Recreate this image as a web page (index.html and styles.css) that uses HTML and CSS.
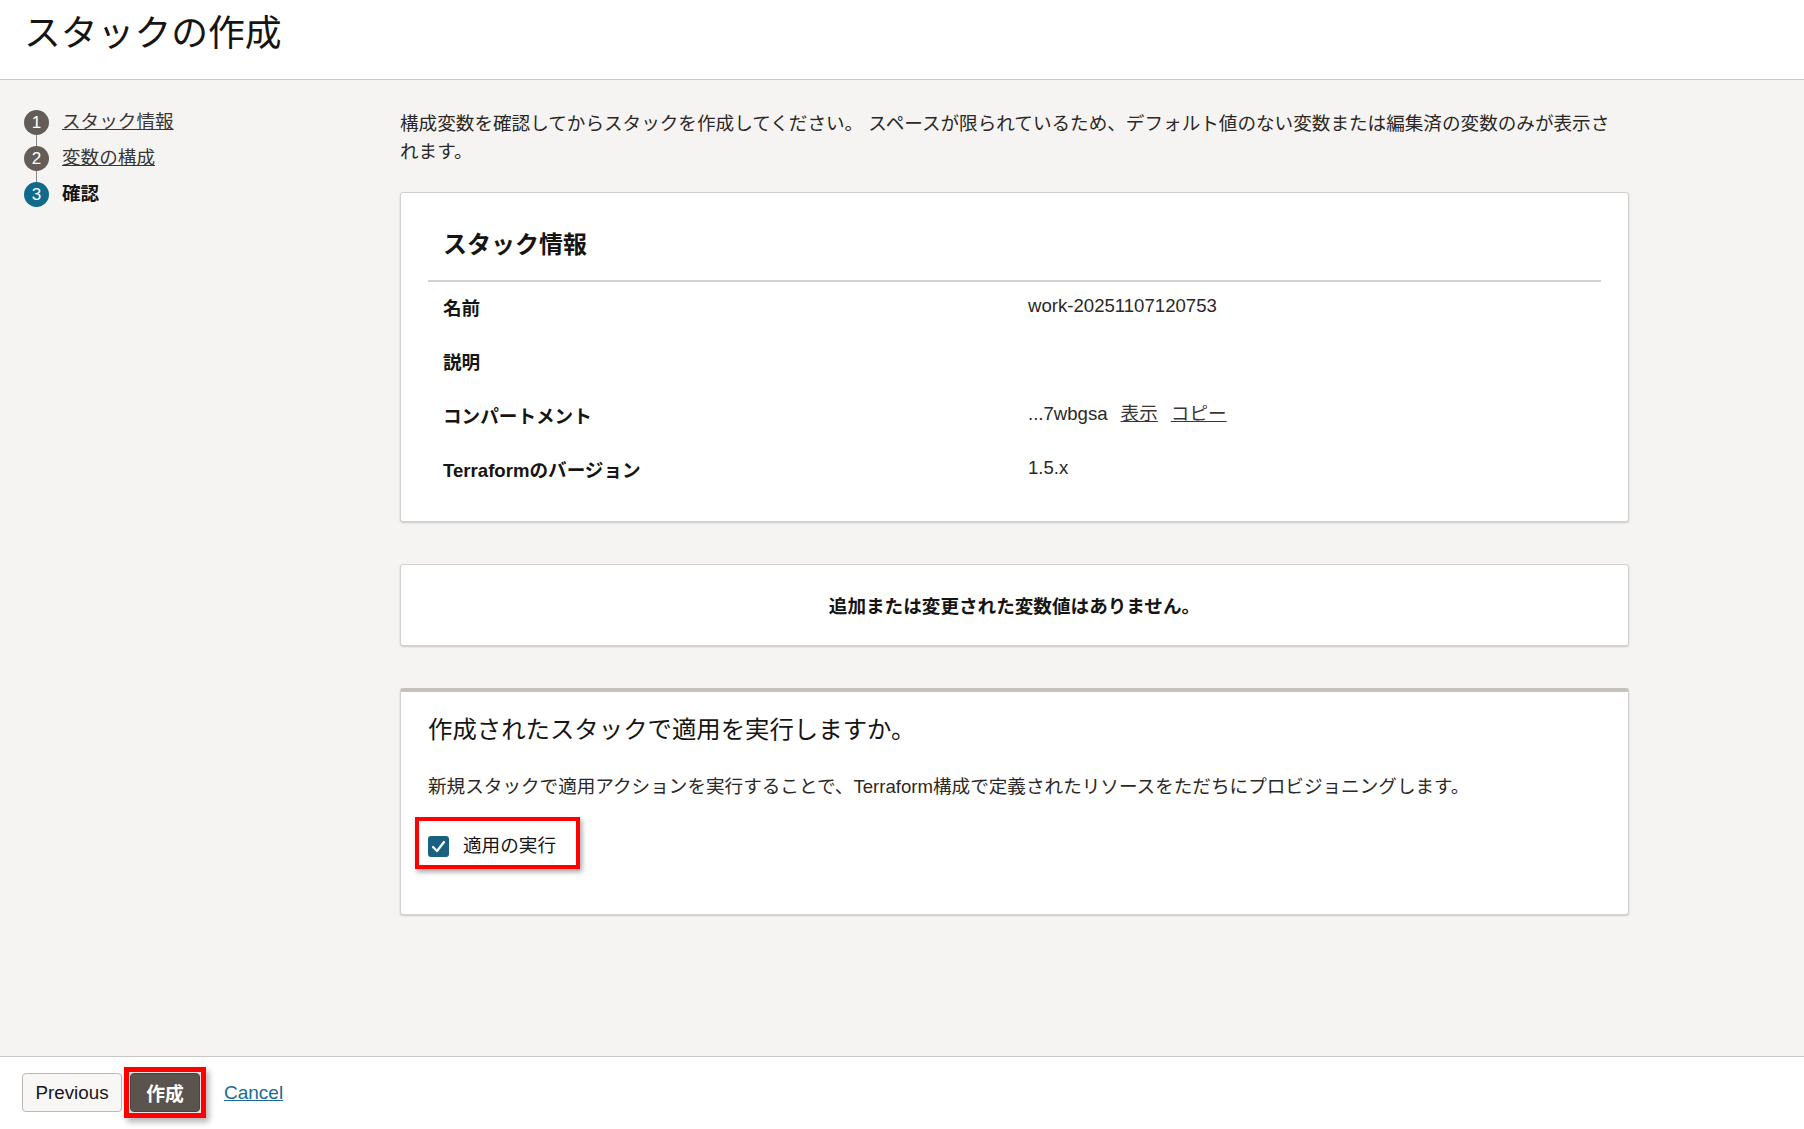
FILE: index.html
```html
<!DOCTYPE html>
<html lang="ja">
<head>
    <meta charset="UTF-8">
    <title>スタックの作成</title>
    <link rel="stylesheet" href="styles.css">
</head>
<body>
    <div class="header">
        <h1>スタックの作成</h1>
    </div>

    <div class="main">
        <ol class="steps">
            <li class="step"><span class="num">1</span><a href="#">スタック情報</a></li>
            <li class="step"><span class="num">2</span><a href="#">変数の構成</a></li>
            <li class="step current"><span class="num">3</span><span class="step-label">確認</span></li>
        </ol>

        <div class="content">
            <p class="intro">構成変数を確認してからスタックを作成してください。 スペースが限られているため、デフォルト値のない変数または編集済の変数のみが表示されます。</p>

            <div class="card info">
                <h2>スタック情報</h2>
                <div class="row"><div class="row-label">名前</div><div class="row-value">work-20251107120753</div></div>
                <div class="row"><div class="row-label">説明</div><div class="row-value"></div></div>
                <div class="row">
                    <div class="row-label">コンパートメント</div>
                    <div class="row-value">...7wbgsa<a href="#" class="inline-link">表示</a><a href="#" class="inline-link">コピー</a></div>
                </div>
                <div class="row"><div class="row-label">Terraformのバージョン</div><div class="row-value">1.5.x</div></div>
            </div>

            <div class="card empty">追加または変更された変数値はありません。</div>

            <div class="card apply">
                <h3>作成されたスタックで適用を実行しますか。</h3>
                <p>新規スタックで適用アクションを実行することで、Terraform構成で定義されたリソースをただちにプロビジョニングします。</p>
                <label class="check-wrap">
                    <span class="checkbox">
                        <svg width="21" height="21" viewBox="0 0 21 21"><polyline points="5,11 9,15 16,6" fill="none" stroke="#fff" stroke-width="2.2" stroke-linecap="round" stroke-linejoin="round"/></svg>
                    </span>
                    適用の実行
                </label>
            </div>
        </div>
    </div>

    <div class="footer">
        <button class="btn">Previous</button>
        <span class="highlight"><button class="btn primary">作成</button></span>
        <a href="#" class="cancel">Cancel</a>
    </div>
</body>
</html>
```

FILE: styles.css
```css
* {
    box-sizing: border-box;
}
body {
    margin: 0;
    min-height: 100vh;
    display: flex;
    flex-direction: column;
    background-color: #f5f4f2;
    color: #161513;
    font-family: "Liberation Sans", "Noto Sans CJK JP", sans-serif;
    font-size: 18.6px;
    line-height: 28px;
}
.header {
    height: 80px;
    padding: 12px 24px 0;
    background-color: #fff;
    border-bottom: 1px solid #c9c6c2;
}
.header h1 {
    margin: 0;
    font-size: 36.8px;
    font-weight: normal;
    line-height: 44px;
}
.main {
    flex: 1;
    display: flex;
    padding-top: 24px;
}

/* Step list */
.steps {
    list-style: none;
    width: 400px;
    margin: 0;
    padding: 0 0 0 24px;
}
.step {
    display: flex;
    align-items: center;
    height: 36px;
}
.num {
    position: relative;
    flex: none;
    width: 25px;
    height: 25px;
    margin-right: 13px;
    border-radius: 50%;
    background-color: #645d57;
    color: #fff;
    font-size: 17px;
    line-height: 25px;
    text-align: center;
}
.step + .step .num::before {
    content: "";
    position: absolute;
    left: 12px;
    bottom: 100%;
    width: 1px;
    height: 11px;
    background-color: #8c8580;
}
.step a {
    color: #3a3632;
}
.current .num {
    background-color: #0f6a8b;
}
.current .step-label {
    font-weight: bold;
}

.content {
    width: 1229px;
}
.intro {
    margin: 6px 0 26px;
    padding-right: 12px;
    color: #2b2825;
}

/* Cards */
.card {
    background-color: #fff;
    border: 1px solid #d3d0cd;
    border-radius: 3px;
    box-shadow: 0 1px 2px rgba(0, 0, 0, 0.18);
}
.info {
    padding: 1px 27px 23px;
}
.info h2 {
    margin: 0;
    padding: 35px 15px 19px;
    font-size: 24px;
    line-height: 32px;
    border-bottom: 2px solid #d3d0cd;
}
.row {
    display: grid;
    grid-template-columns: 585px 1fr;
    align-items: center;
    height: 54px;
    padding: 0 15px;
}
.row-label {
    font-weight: bold;
}
.row-value {
    padding-bottom: 6px;
    color: #2b2825;
}
.inline-link {
    margin-left: 13px;
    color: #3a3632;
}
.empty {
    margin-top: 42px;
    padding: 28px 26px 24px;
    font-weight: bold;
    text-align: center;
}
.apply {
    margin-top: 42px;
    padding: 22px 27px 45px;
    border-top: 4px solid #c5c1bd;
}
.apply h3 {
    margin: 0;
    font-size: 24.4px;
    font-weight: normal;
    line-height: 32px;
}
.apply p {
    margin: 27px 0 0;
    color: #2b2825;
}
.check-wrap {
    display: flex;
    align-items: center;
    width: fit-content;
    margin: 16px 0 0 -13px;
    padding: 13px 20px 7px 9px;
    border: 4px solid #ff0000;
    box-shadow: 2px 3px 5px rgba(0, 0, 0, 0.35);
    line-height: 24px;
}
.checkbox {
    display: flex;
    width: 21px;
    height: 21px;
    margin-right: 14px;
    border-radius: 3px;
    background-color: #1a6080;
}

/* Footer */
.footer {
    display: flex;
    align-items: flex-start;
    height: 73px;
    padding: 16px 22px 0;
    background-color: #fff;
    border-top: 1px solid #c9c6c2;
}
.btn {
    height: 39px;
    padding: 0;
    border-radius: 4px;
    font-family: inherit;
    font-size: 18.8px;
}
.btn:first-child {
    width: 100px;
    border: 1px solid #bcb8b4;
    background-color: #f8f7f6;
    color: #161513;
}
.highlight {
    display: flex;
    margin: -6px 0 0 2px;
    padding: 1px;
    border: 5px solid #ff0000;
    background-color: #e6e3e0;
    box-shadow: 3px 4px 6px rgba(0, 0, 0, 0.3);
}
.btn.primary {
    width: 70px;
    border: 1px solid #4a443f;
    background-color: #5b544e;
    color: #fff;
    font-weight: bold;
}
.cancel {
    margin-left: 18px;
    color: #1b6b92;
    font-size: 19px;
    line-height: 39px;
}
```
